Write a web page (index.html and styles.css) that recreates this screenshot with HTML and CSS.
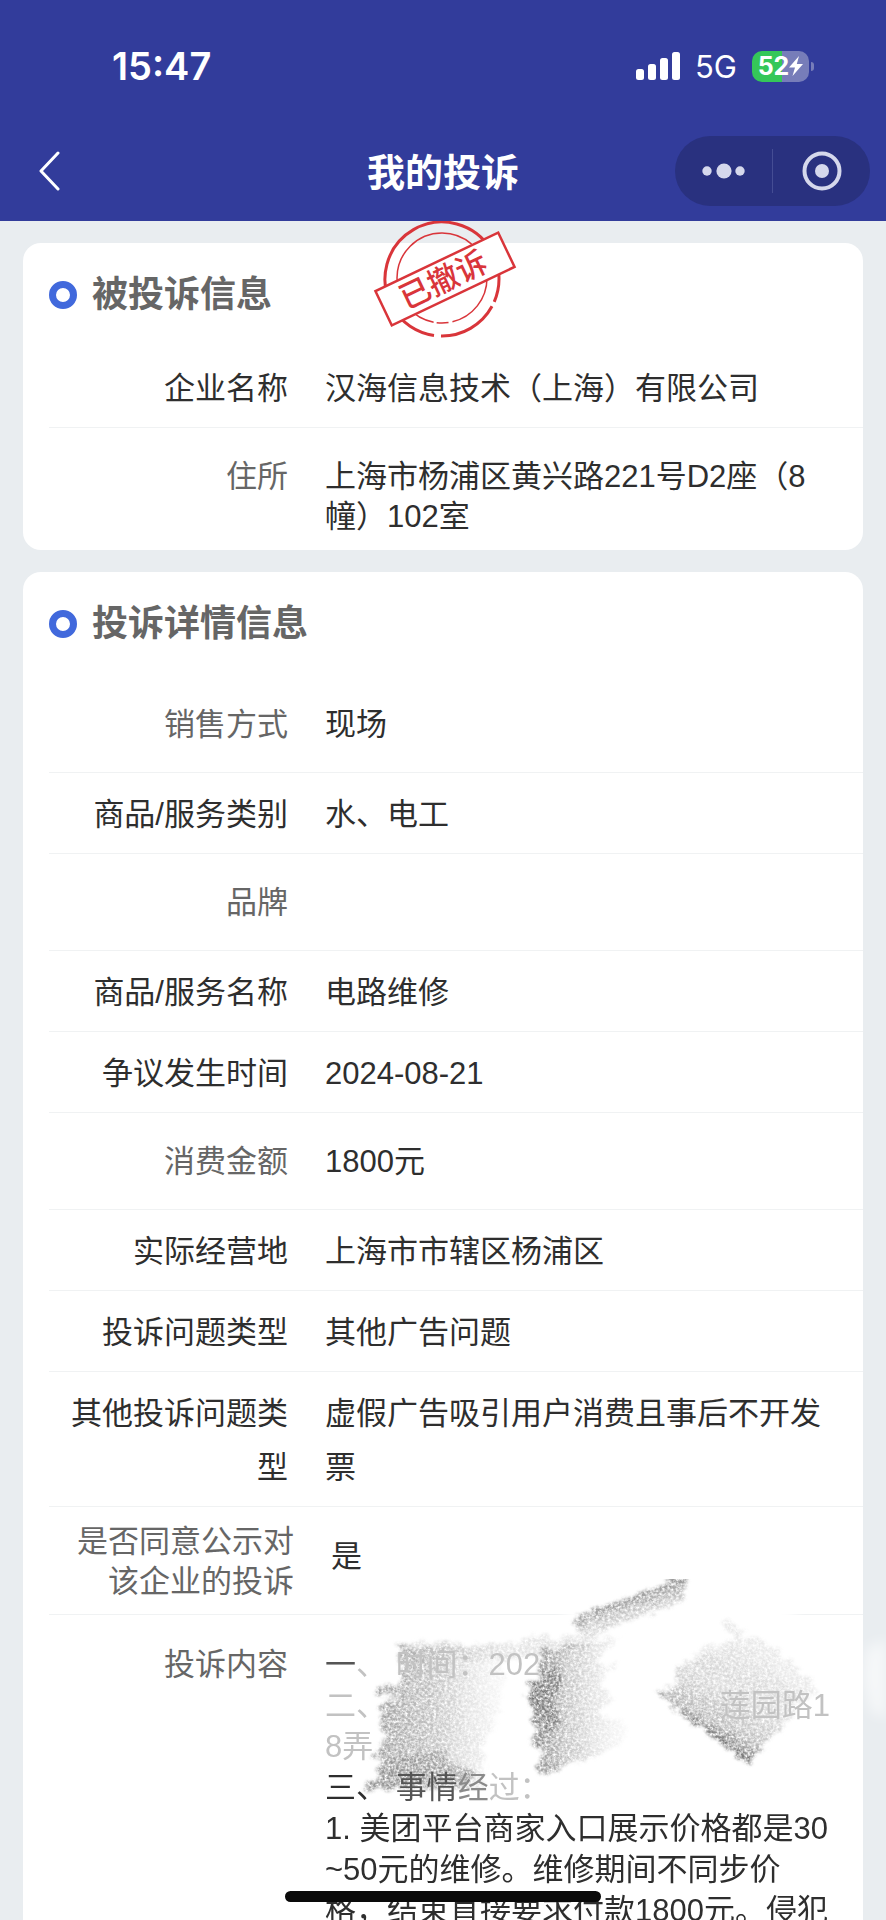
FILE: index.html
```html
<!DOCTYPE html>
<html lang="zh-CN">
<head>
    <meta charset="UTF-8">
    <meta name="viewport" content="width=device-width, initial-scale=1.0">
    <title>我的投诉</title>
    <link rel="stylesheet" href="styles.css">
</head>
<body>
    <div class="screen">
        <header class="header">
            <div class="status-bar">
                <span class="time">15:47</span>
                <div class="status-icons">
                    <svg class="signal" viewBox="0 0 44 28" width="44" height="28" fill="#fff">
                        <rect x="0" y="17" width="8" height="11" rx="2.5"/>
                        <rect x="12" y="12" width="8" height="16" rx="2.5"/>
                        <rect x="24" y="6" width="8" height="22" rx="2.5"/>
                        <rect x="36" y="0" width="8" height="28" rx="2.5"/>
                    </svg>
                    <span class="network">5G</span>
                    <div class="battery">
                        <span>52</span>
                        <svg viewBox="0 0 14 20" width="14" height="20" fill="#fff">
                            <path d="M10 0 L0 11.5 H6 L3.5 20 L14 8 H7.8 Z"/>
                        </svg>
                    </div>
                </div>
            </div>
            <nav class="nav-bar">
                <button class="back-button" aria-label="返回">
                    <svg viewBox="0 0 22 40" width="22" height="40" fill="none" stroke="#fff" stroke-width="3" stroke-linecap="round" stroke-linejoin="round">
                        <path d="M19 2 L2 20 L19 38"/>
                    </svg>
                </button>
                <h1 class="nav-title">我的投诉</h1>
                <div class="capsule">
                    <button class="capsule-button" aria-label="更多">
                        <svg viewBox="0 0 44 16" width="44" height="16" fill="#d5d8ec">
                            <circle cx="5" cy="8" r="4.7"/>
                            <circle cx="22" cy="8" r="7.6"/>
                            <circle cx="38" cy="8" r="4.7"/>
                        </svg>
                    </button>
                    <button class="capsule-button" aria-label="关闭">
                        <svg viewBox="0 0 40 40" width="40" height="40">
                            <circle cx="20" cy="20" r="17.5" fill="none" stroke="#d5d8ec" stroke-width="4"/>
                            <circle cx="20" cy="20" r="7" fill="#d5d8ec"/>
                        </svg>
                    </button>
                </div>
            </nav>
        </header>

        <main class="main">
            <section class="card">
                <h2 class="card-title">被投诉信息</h2>
                <dl class="rows">
                    <div class="row">
                        <dt>企业名称</dt>
                        <dd>汉海信息技术（上海）有限公司</dd>
                    </div>
                    <div class="row row-light">
                        <dt>住所</dt>
                        <dd>上海市杨浦区黄兴路221号D2座（8幢）102室</dd>
                    </div>
                </dl>
            </section>

            <section class="card">
                <h2 class="card-title">投诉详情信息</h2>
                <dl class="rows">
                    <div class="row row-light">
                        <dt>销售方式</dt>
                        <dd>现场</dd>
                    </div>
                    <div class="row">
                        <dt>商品/服务类别</dt>
                        <dd>水、电工</dd>
                    </div>
                    <div class="row row-light">
                        <dt>品牌</dt>
                        <dd></dd>
                    </div>
                    <div class="row">
                        <dt>商品/服务名称</dt>
                        <dd>电路维修</dd>
                    </div>
                    <div class="row">
                        <dt>争议发生时间</dt>
                        <dd>2024-08-21</dd>
                    </div>
                    <div class="row row-light">
                        <dt>消费金额</dt>
                        <dd>1800元</dd>
                    </div>
                    <div class="row">
                        <dt>实际经营地</dt>
                        <dd>上海市市辖区杨浦区</dd>
                    </div>
                    <div class="row">
                        <dt>投诉问题类型</dt>
                        <dd>其他广告问题</dd>
                    </div>
                    <div class="row">
                        <dt>其他投诉问题类型</dt>
                        <dd>虚假广告吸引用户消费且事后不开发票</dd>
                    </div>
                    <div class="row row-light row-agree">
                        <dt>是否同意公示对该企业的投诉</dt>
                        <dd>是</dd>
                    </div>
                    <div class="row row-light row-content">
                        <dt>投诉内容</dt>
                        <dd>
                            <!-- pencil smudges over the private lines -->
                            <svg class="smudge" viewBox="0 0 561 250" width="561" height="250" aria-hidden="true">
                                <defs>
                                    <filter id="grain" x="-10%" y="-10%" width="120%" height="120%" color-interpolation-filters="sRGB">
                                        <feTurbulence type="fractalNoise" baseFrequency="0.08 0.16" numOctaves="3" seed="7" result="edge"/>
                                        <feTurbulence type="fractalNoise" baseFrequency="0.35" numOctaves="4" seed="3" result="noise"/>
                                        <feDisplacementMap in="SourceGraphic" in2="edge" scale="16" xChannelSelector="R" yChannelSelector="G" result="rough"/>
                                        <feGaussianBlur in="rough" stdDeviation="1.5" result="soft"/>
                                        <feColorMatrix in="noise" type="matrix" values="0 0 0 0 0  0 0 0 0 0  0 0 0 0 0  2 0 0 0 -0.35" result="mask"/>
                                        <feComposite in="soft" in2="mask" operator="in"/>
                                    </filter>
                                    <filter id="haze" x="-30%" y="-30%" width="160%" height="160%">
                                        <feGaussianBlur stdDeviation="7"/>
                                    </filter>
                                    <linearGradient id="leftShade" x1="0" y1="0" x2="1" y2="0">
                                        <stop offset="0" stop-color="#999"/>
                                        <stop offset="0.5" stop-color="#aaa" stop-opacity="0.7"/>
                                        <stop offset="1" stop-color="#ccc" stop-opacity="0.1"/>
                                    </linearGradient>
                                    <linearGradient id="midShade" x1="0" y1="0" x2="1" y2="0">
                                        <stop offset="0" stop-color="#777"/>
                                        <stop offset="0.4" stop-color="#999" stop-opacity="0.6"/>
                                        <stop offset="1" stop-color="#ccc" stop-opacity="0.1"/>
                                    </linearGradient>
                                    <linearGradient id="rightShade" gradientUnits="userSpaceOnUse" x1="378" y1="172" x2="432" y2="92">
                                        <stop offset="0" stop-color="#777"/>
                                        <stop offset="0.12" stop-color="#999" stop-opacity="0.7"/>
                                        <stop offset="0.6" stop-color="#bbb" stop-opacity="0.45"/>
                                        <stop offset="1" stop-color="#ccc" stop-opacity="0.15"/>
                                    </linearGradient>
                                    <linearGradient id="topShade" gradientUnits="userSpaceOnUse" x1="300" y1="18" x2="312" y2="50">
                                        <stop offset="0" stop-color="#777"/>
                                        <stop offset="1" stop-color="#bbb" stop-opacity="0.4"/>
                                    </linearGradient>
                                </defs>
                                <g filter="url(#haze)" fill="#fff">
                                    <path d="M240 26 L360 16 L470 26 L470 56 L240 56 Z"/>
                                    <path d="M541 70 L561 60 V140 L546 132 L538 100 Z" opacity="0.6"/>
                                </g>
                                <g filter="url(#grain)" transform="translate(0 -3) scale(1 0.89)">
                                    <path fill="url(#topShade)" d="M248 46 L356 1 L363 8 L356 30 L298 52 L280 62 L254 66 Z"/>
                                    <path fill="#bbb" opacity="0.4" d="M73 78 L100 72 L170 78 L205 70 L275 66 L262 82 L180 94 L74 92 Z"/>
                                    <path fill="url(#leftShade)" d="M74 80 L170 78 L180 118 L172 160 L158 190 L160 240 L42 240 L40 232 L54 228 L50 218 L58 208 L46 204 L62 182 L54 164 L56 142 L74 136 L52 132 L54 122 L76 124 Z"/>
                                    <path fill="#888" opacity="0.6" d="M66 204 L120 198 L126 212 L150 222 L144 238 L46 238 L42 232 L56 226 Z"/>
                                    <path fill="url(#midShade)" d="M216 84 L270 74 L300 66 L268 98 L292 98 L274 122 L290 138 L272 154 L300 164 L302 180 L276 200 L214 223 L212 212 L218 196 L206 188 L212 174 L206 160 L210 148 L200 134 L204 122 L214 116 Z"/>
                                    <path fill="#666" opacity="0.55" d="M204 126 L234 98 L238 118 L226 142 L236 164 L222 178 L214 158 L204 140 Z"/>
                                    <path fill="url(#rightShade)" d="M330 131 L338 127 L350 126 L352 100 L384 84 L420 78 L476 132 L462 164 L434 196 L426 214 L418 208 Z"/>
                                    <path fill="#bbb" opacity="0.3" d="M396 52 L404 48 L420 68 L444 74 L494 128 L466 150 L372 104 L376 82 L410 72 Z"/>
                                </g>
                            </svg>
                            <p><span class="faded">一</span><span class="ghost">、</span> <span class="ghost">时间：202</span></p>
                            <p class="spread"><span class="ghost">二、</span><span class="ghost">莲园路1</span></p>
                            <p><span class="ghost">8弄</span></p>
                            <p>三、 <span class="faded">事情</span><span class="worn">经</span><span class="ghost">过：</span></p>
                            <p>1. 美团平台商家入口展示价格都是30~50元的维修。维修期间不同步价格，结束直接要求付款1800元。侵犯</p>
                        </dd>
                    </div>
                </dl>
            </section>

            <svg class="stamp" viewBox="0 0 150 120" width="150" height="120" fill="none" stroke="#d9353a">
                <circle cx="74" cy="58" r="57" stroke-width="3" stroke-dasharray="232 5 62 7 52 0" transform="rotate(-210 74 58)"/>
                <circle cx="74" cy="57" r="45" stroke-width="1.5" stroke-dasharray="60 4 12 3 30 5 130 8"/>
                <g transform="rotate(-25.5 77 58)">
                    <rect x="9" y="39" width="136" height="38" fill="#fff" stroke-width="2.5"/>
                    <text class="stamp-text" x="75" y="69" text-anchor="middle">已撤诉</text>
                </g>
            </svg>
        </main>
        <div class="home-indicator"></div>
    </div>
</body>
</html>
```

FILE: styles.css
```css
*,
*::before,
*::after {
    box-sizing: border-box;
    margin: 0;
    padding: 0;
}

body {
    background: #e9edf0;
    color: #2e2e2e;
    font-family: "Liberation Sans", "Noto Sans CJK SC", sans-serif;
    font-size: 31px;
}

button {
    border: none;
    background: none;
    cursor: pointer;
}

svg {
    display: block;
}

.screen {
    position: relative;
    display: flex;
    flex-direction: column;
    height: 100vh;
    overflow: hidden;
}

/* header */
.header {
    flex: none;
    background: #323c9b;
    color: #fff;
    padding-bottom: 15px;
}

.status-bar {
    display: flex;
    justify-content: space-between;
    align-items: center;
    height: 136px;
    padding: 0 72px 4px 112px;
    font-family: Inter, sans-serif;
}

.time {
    font-size: 38px;
    font-weight: 600;
}

.status-icons {
    display: flex;
    align-items: center;
    gap: 15px;
}

.network {
    font-size: 31px;
}

.battery {
    position: relative;
    display: flex;
    align-items: center;
    justify-content: center;
    width: 57px;
    height: 31px;
    margin-right: 5px;
    border-radius: 10px;
    background: linear-gradient(to right, #35c759 52%, #777db9 52%);
    font-size: 25px;
    font-weight: 700;
}

.battery::after {
    content: "";
    position: absolute;
    right: -5px;
    top: 11px;
    width: 3px;
    height: 9px;
    border-radius: 0 3px 3px 0;
    background: #777db9;
}

.nav-bar {
    display: grid;
    grid-template-columns: 1fr auto 1fr;
    align-items: center;
    height: 70px;
    padding: 0 16px 0 39px;
}

.back-button {
    justify-self: start;
}

.nav-title {
    margin-right: 23px;
    padding-bottom: 4px;
    font-size: 38px;
    font-weight: 700;
}

.capsule {
    justify-self: end;
    display: flex;
    align-items: center;
    width: 195px;
    height: 70px;
    border-radius: 35px;
    background: #29317f;
}

.capsule-button {
    flex: 1;
    display: flex;
    justify-content: center;
    align-items: center;
    height: 44px;
}

.capsule-button + .capsule-button {
    border-left: 1px solid #454d94;
}

/* cards */
.main {
    position: relative;
    flex: 1;
    min-height: 0;
    overflow: hidden;
    padding: 22px 23px 0;
}

.card {
    background: #fff;
    border-radius: 18px;
    padding-left: 26px;
    margin-bottom: 22px;
}

.card-title {
    display: flex;
    align-items: center;
    gap: 15px;
    height: 104px;
    color: #666;
    font-size: 36px;
    font-weight: 700;
    line-height: 48px;
}

.card-title::before {
    content: "";
    width: 28px;
    height: 28px;
    border: 7px solid #4169dc;
    border-radius: 50%;
}

.row {
    display: flex;
    gap: 37px;
    padding: 15px 33px 11px 0;
    border-bottom: 1px solid #f0f2f3;
    line-height: 54px;
}

.row dt {
    flex: none;
    width: 239px;
    text-align: right;
}

.row dd {
    flex: 1;
    min-width: 0;
}

.row-light {
    padding-top: 29px;
    padding-bottom: 27px;
    line-height: 40px;
}

.row-light dt {
    color: #666;
}

.row:last-child {
    padding-bottom: 13px;
    border-bottom: none;
}

.row-agree {
    align-items: center;
    padding-top: 15px;
    padding-bottom: 12px;
}

.row-agree dt {
    width: 245px;
}

.row-agree dd {
    padding-bottom: 10px;
}

/* complaint text */
.row-content {
    line-height: 41px;
}

.row-content dd {
    position: relative;
    word-break: break-all;
}

.row-content p {
    position: relative;
}

.spread {
    display: flex;
    justify-content: space-between;
}

.faded {
    color: #555;
}

.worn {
    color: #8a8a8a;
}

.ghost {
    color: #c2c2c2;
}

.smudge {
    position: absolute;
    left: 0;
    top: -65px;
}

.stamp {
    position: absolute;
    top: 0;
    left: 50%;
    margin-left: -75px;
}

.stamp-text {
    font-size: 31px;
    font-weight: 500;
    fill: #d9353a;
    stroke: none;
}

.home-indicator {
    position: absolute;
    left: 50%;
    bottom: 18px;
    width: 316px;
    height: 11px;
    margin-left: -158px;
    border-radius: 6px;
    background: #0a0a0a;
}
```
